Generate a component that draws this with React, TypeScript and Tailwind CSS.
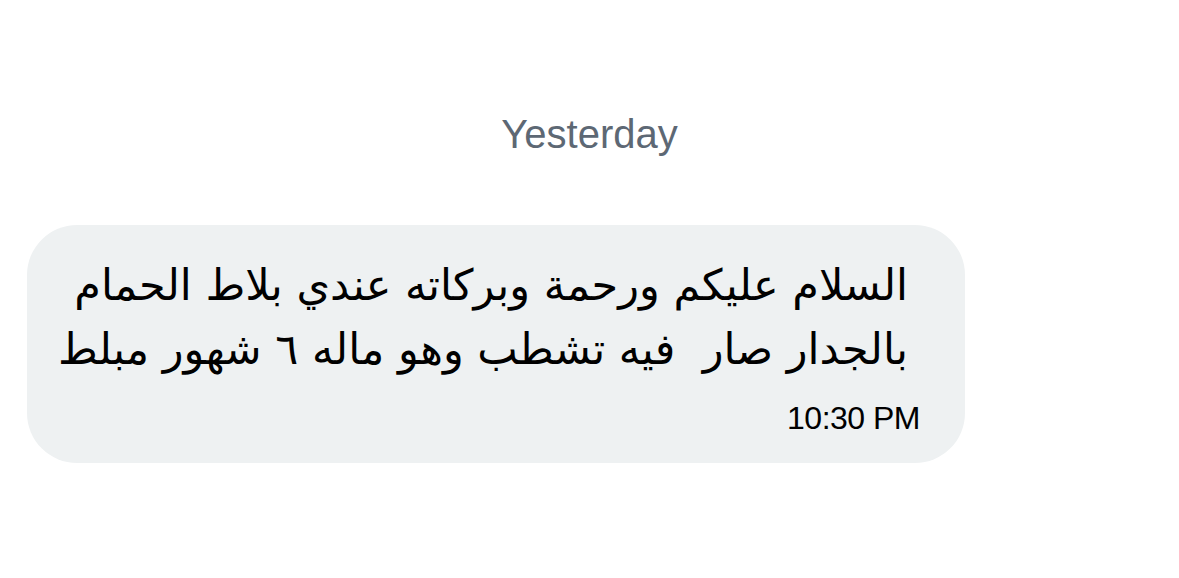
export default function App() {
  return (
    <div className="min-h-[578px] w-[1179px] bg-white font-['Liberation_Sans',sans-serif]">
      <div className="pt-[111px] text-center text-[40px] leading-[46px] text-[#5d6874]">Yesterday</div>
      <div className="ml-[27px] mt-[68px] w-[938px] rounded-[50px] bg-[#eef1f2] pb-[26px] pl-[40px] pr-[45px] pt-[28px]">
        <p
          dir="rtl"
          className="whitespace-nowrap pr-[12px] text-right font-['DejaVu_Sans',sans-serif] text-[43px] leading-[64px] text-black"
        >
          السلام عليكم ورحمة وبركاته عندي بلاط الحمام
          <br />
          بالجدار صار&nbsp; فيه تشطب وهو ماله ٦ شهور مبلط
        </p>
        <div className="mt-[18px] text-right text-[32px] leading-[38px] tracking-[-0.5px] text-black">10:30 PM</div>
      </div>
    </div>
  );
}
